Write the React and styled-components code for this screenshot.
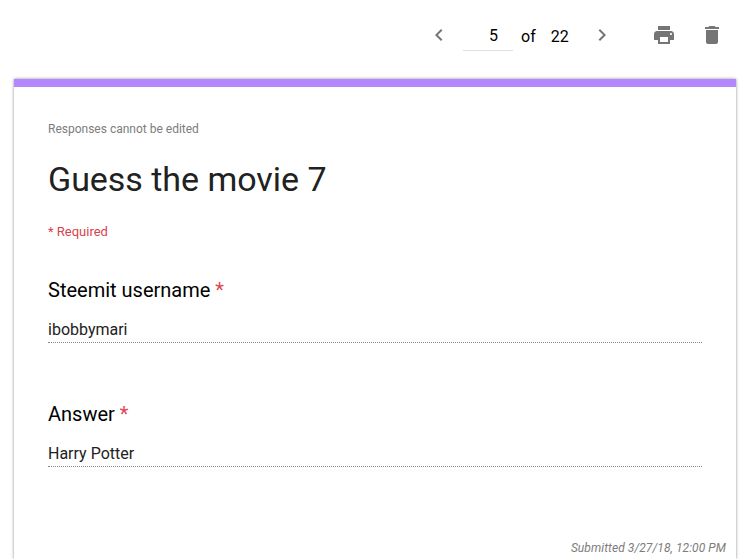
import React from "react";
import styled, { createGlobalStyle } from "styled-components";

const Global = createGlobalStyle`
  html, body { margin: 0; padding: 0; background: #fff; height: 100%; overflow: hidden; }
  body { font-family: Roboto, "Liberation Sans", sans-serif; }
`;
const Page = styled.div`
  width: 740px; height: 559px; overflow: hidden; display: flex; flex-direction: column;
`;
const Toolbar = styled.div`
  height: 79px; flex: none; display: flex; align-items: flex-start; padding-left: 427px; box-sizing: border-box;
`;
const IconSlot = styled.div`
  width: ${p => p.$w}px; height: 24px; margin-top: ${p => p.$top ?? 23}px; margin-left: ${p => p.$ml ?? 0}px;
  display: flex; align-items: center; justify-content: center; color: #757575; flex: none;
`;
const PageInput = styled.div`
  width: 50px; height: 29px; margin: 22px 8px 0 12px; box-sizing: border-box; border-bottom: 1px solid #e0e0e0;
  font-size: 16px; line-height: 28px; text-align: center; padding-left: 11px; color: #000; flex: none;
`;
const Count = styled.span`
  font-size: 16px; line-height: 28px; margin-top: 23px; color: #000; margin-right: ${p => p.$mr}px; flex: none;
`;
const Card = styled.main`
  margin: 0 4px 0 14px; flex: 1; background: #fff; border-top: 8px solid #b388ff;
  box-shadow: 0 0 3px rgba(0,0,0,.45); padding: 34px 34px 0 34px; display: flex; flex-direction: column; min-height: 0;
`;
const Note = styled.div`
  font-size: 12px; line-height: 16px; color: #7d7d7d;
`;
const Title = styled.h1`
  font-size: 34px; font-weight: 400; line-height: 44px; color: #212121; margin: 20px 0 0; letter-spacing: -0.03px;
`;
const Required = styled.div`
  font-size: 13px; line-height: 16px; color: #d9434e; margin-top: 23px;
`;
const Question = styled.section`
  margin-top: ${p => p.$top}px;
`;
const Label = styled.div`
  font-size: 20px; line-height: 24px; color: #000;
`;
const Star = styled.span`
  color: #e0464f;
`;
const Value = styled.div`
  margin-top: 16px; font-size: 16px; line-height: 24px; height: 25px; box-sizing: border-box; color: #212121;
  border-bottom: 1px dotted #888;
`;
const Footer = styled.div`
  margin-top: 73px; font-size: 12px; line-height: 16px; font-style: italic; color: #7d7d7d; text-align: right;
  margin-right: -24px; letter-spacing: 0.07px;
`;

const Glyph = ({ d }) => (
  <svg width="24" height="24" viewBox="0 0 24 24" fill="currentColor"><path d={d} /></svg>
);

export default function App() {
  return (
    <Page>
      <Global />
      <Toolbar>
        <IconSlot $w={24}>
          <Glyph d="M15.41 7.41 14 6l-6 6 6 6 1.41-1.41L10.83 12z" />
        </IconSlot>
        <PageInput>5</PageInput>
        <Count $mr={15}>of</Count>
        <Count $mr={21}>22</Count>
        <IconSlot $w={24}>
          <Glyph d="M10 6 8.59 7.41 13.17 12l-4.58 4.59L10 18l6-6z" />
        </IconSlot>
        <IconSlot $w={24} $ml={38}>
          <Glyph d="M19 8H5c-1.66 0-3 1.34-3 3v6h4v4h12v-4h4v-6c0-1.66-1.34-3-3-3zm-3 11H8v-5h8v5zm3-7c-.55 0-1-.45-1-1s.45-1 1-1 1 .45 1 1-.45 1-1 1zm-1-9H6v4h12V3z" />
        </IconSlot>
        <IconSlot $w={24} $ml={24}>
          <Glyph d="M6 19c0 1.1.9 2 2 2h8c1.1 0 2-.9 2-2V7H6v12zM19 4h-3.5l-1-1h-5l-1 1H5v2h14V4z" />
        </IconSlot>
      </Toolbar>
      <Card>
        <Note>Responses cannot be edited</Note>
        <Title>Guess the movie 7</Title>
        <Required>* Required</Required>
        <Question $top={38}>
          <Label>Steemit username <Star>*</Star></Label>
          <Value>ibobbymari</Value>
        </Question>
        <Question $top={59}>
          <Label>Answer <Star>*</Star></Label>
          <Value>Harry Potter</Value>
        </Question>
        <Footer>Submitted 3/27/18, 12:00 PM</Footer>
      </Card>
    </Page>
  );
}
